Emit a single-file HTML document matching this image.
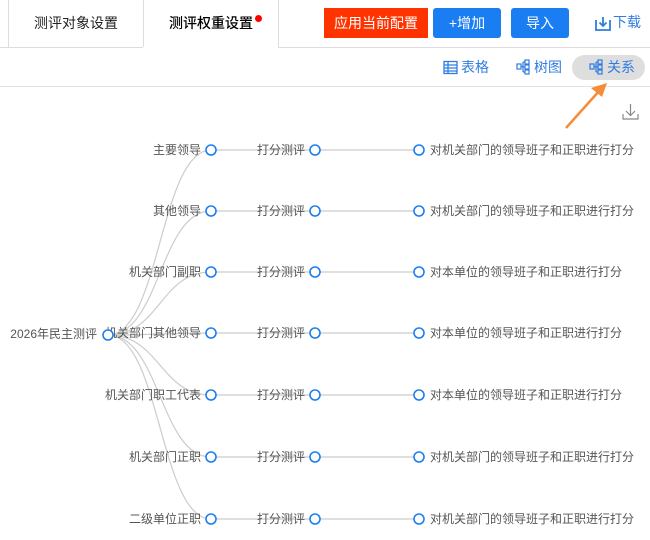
<!DOCTYPE html>
<html><head><meta charset="utf-8"><style>
*{margin:0;padding:0;box-sizing:border-box}
body{width:650px;height:540px;background:#fff;font-family:"Liberation Sans","Noto Sans CJK SC",sans-serif;position:relative;overflow:hidden}
.abs{position:absolute}
.tab{position:absolute;top:0;height:47px;line-height:46px;text-align:center;font-size:14px;color:#222}
.btn{position:absolute;top:8px;height:30px;line-height:30px;text-align:center;color:#fff;font-size:14px;border-radius:3px}
.tb{position:absolute;top:55px;height:25px;line-height:25px;font-size:14px;color:#2f7de0}
</style></head><body>
<div class="abs" style="left:0;top:47px;width:143px;height:1px;background:#ddd"></div>
<div class="abs" style="left:278px;top:47px;width:372px;height:1px;background:#ddd"></div>
<div class="abs" style="left:8px;top:0;width:1px;height:47px;background:#ddd"></div>
<div class="abs" style="left:143px;top:0;width:1px;height:47px;background:#ddd"></div>
<div class="abs" style="left:278px;top:0;width:1px;height:47px;background:#ddd"></div>
<div class="tab" style="left:9px;width:134px">测评对象设置</div>
<div class="tab" style="left:144px;width:134px;color:#000;font-weight:500">测评权重设置</div>
<div class="abs" style="left:255px;top:15px;width:7px;height:7px;border-radius:50%;background:#f00"></div>
<div class="btn" style="left:324px;width:104px;background:#ff3300;border-radius:0">应用当前配置</div>
<div class="btn" style="left:433px;width:68px;background:#1a7ef2">+增加</div>
<div class="btn" style="left:511px;width:58px;background:#1a7ef2">导入</div>
<svg class="abs" style="left:594px;top:14px" width="18" height="18" viewBox="0 0 18 18" fill="none" stroke="#2f7de0" stroke-width="1.8"><path d="M2 6v10h14V6"/><path d="M9 3v9M5.5 8.5L9 12l3.5-3.5"/></svg>
<div class="abs" style="left:613px;top:12px;font-size:14px;color:#2f7de0">下载</div>
<div class="abs" style="left:0;top:86px;width:650px;height:1px;background:#e3e3e3"></div>
<svg class="abs" style="left:443px;top:60px" width="15" height="15" viewBox="0 0 15 15" fill="none" stroke="#2f7de0" stroke-width="1.3"><rect x="1" y="1.5" width="13" height="12"/><path d="M1 5h13M1 8h13M1 11h13M5 1.5v12"/></svg>
<div class="tb" style="left:461px">表格</div>
<svg class="abs" style="left:516px;top:59px" width="15" height="16" viewBox="0 0 15 16" fill="none" stroke="#2f7de0" stroke-width="1.2"><rect x="1" y="5" width="4" height="5"/><rect x="9" y="1" width="4" height="4"/><rect x="9" y="6" width="4" height="4"/><rect x="9" y="11" width="4" height="4"/><path d="M5 7.5h2M7 3v10M7 3h2M7 8h2M7 13h2"/></svg>
<div class="tb" style="left:534px">树图</div>
<div class="abs" style="left:572px;top:55px;width:73px;height:25px;border-radius:13px;background:#dedede"></div>
<svg class="abs" style="left:589px;top:59px" width="15" height="16" viewBox="0 0 15 16" fill="none" stroke="#2f7de0" stroke-width="1.2"><rect x="1" y="5" width="4" height="5"/><rect x="9" y="1" width="4" height="4"/><rect x="9" y="6" width="4" height="4"/><rect x="9" y="11" width="4" height="4"/><path d="M5 7.5h2M7 3v10M7 3h2M7 8h2M7 13h2"/></svg>
<div class="tb" style="left:607px">关系</div>
<svg class="abs" style="left:622px;top:103px" width="18" height="18" viewBox="0 0 18 18" fill="none" stroke="#888" stroke-width="1.2"><path d="M1 11v5h15v-5M8.5 1v11M4 8l4.5 4.5L13 8"/></svg>
<svg class="abs" style="left:0;top:0" width="650" height="540">
<path d="M566 128L600 90" stroke="#f68b3a" stroke-width="2.5"/>
<path d="M607 83L591 88L602 97Z" fill="#f68b3a"/>
<g fill="none" stroke="#ccc" stroke-width="1.2">
<path d="M108 335C160 335 160 150 211 150"/><path d="M108 335C160 335 160 211 211 211"/><path d="M108 335C160 335 160 272 211 272"/><path d="M108 335C160 335 160 333 211 333"/><path d="M108 335C160 335 160 395 211 395"/><path d="M108 335C160 335 160 457 211 457"/><path d="M108 335C160 335 160 519 211 519"/>
<path d="M211 150H419M211 211H419M211 272H419M211 333H419M211 395H419M211 457H419M211 519H419"/>
</g>
<g font-size="12" fill="#555" font-family="Liberation Sans,Noto Sans CJK SC,sans-serif">
<text x="97" y="338" text-anchor="end">2026年民主测评</text>
<g text-anchor="end">
<text x="201" y="154">主要领导</text><text x="201" y="215">其他领导</text><text x="201" y="276">机关部门副职</text><text x="201" y="337">机关部门其他领导</text><text x="201" y="399">机关部门职工代表</text><text x="201" y="461">机关部门正职</text><text x="201" y="523">二级单位正职</text>
<text x="305" y="154">打分测评</text><text x="305" y="215">打分测评</text><text x="305" y="276">打分测评</text><text x="305" y="337">打分测评</text><text x="305" y="399">打分测评</text><text x="305" y="461">打分测评</text><text x="305" y="523">打分测评</text>
</g>
<text x="430" y="154">对机关部门的领导班子和正职进行打分</text><text x="430" y="215">对机关部门的领导班子和正职进行打分</text><text x="430" y="276">对本单位的领导班子和正职进行打分</text><text x="430" y="337">对本单位的领导班子和正职进行打分</text><text x="430" y="399">对本单位的领导班子和正职进行打分</text><text x="430" y="461">对机关部门的领导班子和正职进行打分</text><text x="430" y="523">对机关部门的领导班子和正职进行打分</text>
</g>
<g fill="#fff" stroke="#1e7ef0" stroke-width="1.6">
<circle cx="108" cy="335" r="5"/>
<circle cx="211" cy="150" r="5"/><circle cx="211" cy="211" r="5"/><circle cx="211" cy="272" r="5"/><circle cx="211" cy="333" r="5"/><circle cx="211" cy="395" r="5"/><circle cx="211" cy="457" r="5"/><circle cx="211" cy="519" r="5"/>
<circle cx="315" cy="150" r="5"/><circle cx="315" cy="211" r="5"/><circle cx="315" cy="272" r="5"/><circle cx="315" cy="333" r="5"/><circle cx="315" cy="395" r="5"/><circle cx="315" cy="457" r="5"/><circle cx="315" cy="519" r="5"/>
<circle cx="419" cy="150" r="5"/><circle cx="419" cy="211" r="5"/><circle cx="419" cy="272" r="5"/><circle cx="419" cy="333" r="5"/><circle cx="419" cy="395" r="5"/><circle cx="419" cy="457" r="5"/><circle cx="419" cy="519" r="5"/>
</g>
</svg>
</body></html>
